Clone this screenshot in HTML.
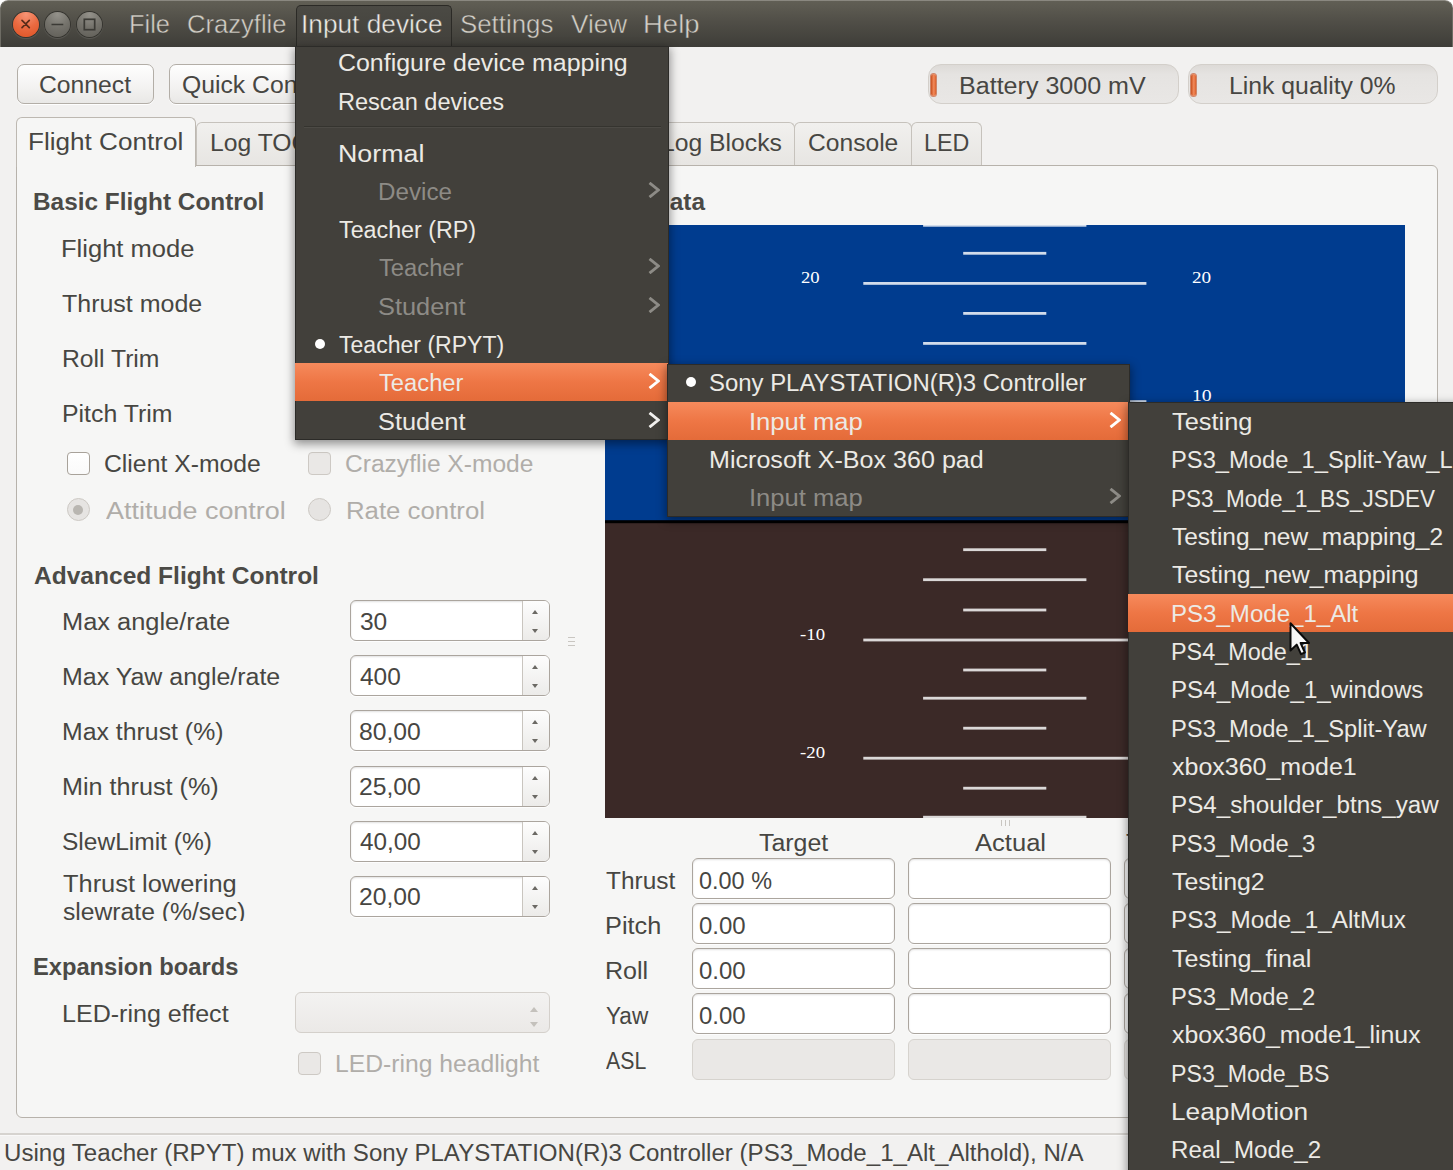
<!DOCTYPE html>
<html><head><meta charset="utf-8"><title>Crazyflie PC Client</title>
<style>
*{box-sizing:border-box;margin:0;padding:0}
html,body{width:1453px;height:1170px;overflow:hidden;background:#fff}
body{font-family:"Liberation Sans",sans-serif;font-size:23px;color:#3c3b37;position:relative}
.abs{position:absolute}
.t{position:absolute;white-space:nowrap;line-height:30px;height:30px;transform-origin:0 0;z-index:2}
#win{position:absolute;left:0;top:0;width:1453px;height:1170px;background:#f2f1f0;border-radius:8px 8px 0 0;overflow:hidden}
#title{position:absolute;left:0;top:0;width:1453px;height:46.500px;background:linear-gradient(#615f55,#504e47 45%,#3e3d38);border-radius:8px 8px 0 0;border-top:1px solid #8a8880;border-left:1px solid #6e6c64;border-right:1px solid #6e6c64}
.wb{position:absolute;top:11.500px;width:25.500px;height:25.500px;border-radius:50%;box-shadow:0 0 0 1px #35342f, 0 1px 1px 1px rgba(255,255,255,.12)}
.btn{position:absolute;height:40px;border:1px solid #b3aea7;border-radius:7px;background:linear-gradient(#fefefe,#f4f3f2 55%,#e9e8e6);box-shadow:0 1px 0 rgba(255,255,255,.9)}
.pbar{position:absolute;top:64px;height:40px;border:1px solid #d3cfca;border-radius:13px;background:linear-gradient(#dddad7,#e5e3e1 25%,#e9e7e5)}
.pbar i{position:absolute;left:2px;top:9px;width:5px;height:22px;border-radius:3px;background:linear-gradient(90deg,#c8501f,#f28a5b 55%,#d9602c);box-shadow:0 0 0 1px rgba(190,70,25,.6)}
.tab{position:absolute;top:122px;height:44px;border:1px solid #c6c2bc;border-bottom:none;border-radius:6px 6px 0 0;background:linear-gradient(#f1f0ee,#e7e5e2)}
.tab.act{top:117px;height:50px;background:#f6f6f5;z-index:3;border-color:#bdb8b1}
#pane{position:absolute;left:15.500px;top:165px;width:1422.500px;height:952.500px;border:1px solid #b7b2ab;border-radius:0 6px 6px 6px;background:#f6f6f5}
.cb{position:absolute;width:23px;height:23px;border:1px solid #a8a29a;border-radius:4px;background:linear-gradient(#fff,#fafafa)}
.cb.off{border-color:#cdc9c4;background:#eae8e6}
.rb{position:absolute;width:23px;height:23px;border:1px solid #cdc9c4;border-radius:50%;background:#e6e4e2}
.rb.on:after{content:"";position:absolute;left:5.500px;top:5.500px;width:10px;height:10px;border-radius:50%;background:#b9b6b1}
.spin{position:absolute;left:350.200px;width:199.500px;height:41px;border:1px solid #aba59e;border-radius:6px;background:#fff;box-shadow:inset 0 1px 2px rgba(0,0,0,.12),0 1px 0 rgba(255,255,255,.8);overflow:hidden}
.spin b{position:absolute;right:0;top:0;width:27px;height:100%;border-left:1px solid #c9c5bf;background:linear-gradient(#fdfdfd,#ecebe9)}
.spin b:before{content:"";position:absolute;left:9.500px;top:8.500px;border:3.500px solid transparent;border-bottom:4px solid #6b6964;border-top:none}
.spin b:after{content:"";position:absolute;left:9.500px;bottom:7px;border:3.500px solid transparent;border-top:4px solid #6b6964;border-bottom:none}
.fld{position:absolute;width:203px;height:41px;border:1px solid #aba59e;border-radius:6px;background:#fff;box-shadow:inset 0 1px 2px rgba(0,0,0,.12),0 1px 0 rgba(255,255,255,.8)}
.fld.off{background:#eae8e6;border-color:#d6d3ce;box-shadow:none}
.menu{position:absolute;background:#42403b;border:1px solid #2c2b28;box-shadow:0 3px 9px 1px rgba(0,0,0,.42)}
.hl{position:absolute;height:38.100px;background:linear-gradient(#f68a5c,#ee7645 50%,#e46b39)}
.dot{position:absolute;width:10px;height:10px;border-radius:50%;background:#fff}

.t.tm{-webkit-text-stroke:0.45px #4e4c45}

.n{font-family:"Liberation Sans",sans-serif;font-size:23px;font-weight:normal;color:#474642}
.b{font-family:"Liberation Sans",sans-serif;font-size:23px;font-weight:bold;color:#4b4a46}
.d{font-family:"Liberation Sans",sans-serif;font-size:23px;font-weight:normal;color:#b0ada9}
.m{font-family:"Liberation Sans",sans-serif;font-size:23px;font-weight:normal;color:#eceae5}
.md{font-family:"Liberation Sans",sans-serif;font-size:23px;font-weight:normal;color:#8d8b86}
.tm{font-family:"Liberation Sans",sans-serif;font-size:26px;font-weight:normal;color:#d3cfc7}
.s{font-family:"Liberation Serif",serif;font-size:17px;font-weight:normal;color:#ffffff}

</style></head><body>
<div id="win">
<div id="title"></div>
<div class="wb" style="left:13px;background:radial-gradient(circle at 50% 10%,#f79475,#ea6a41 50%,#de5223)"></div>
<div class="wb" style="left:44.500px;background:radial-gradient(circle at 50% 10%,#94928b,#74726b 50%,#5f5d57)"></div>
<div class="wb" style="left:76.500px;background:radial-gradient(circle at 50% 10%,#94928b,#74726b 50%,#5f5d57)"></div>
<svg class="abs" style="left:0;top:0;z-index:2" width="110" height="46" viewBox="0 0 110 46">
<path d="M22 20.300l7.300 7.300M29.300 20.300l-7.300 7.300" stroke="#5a2c19" stroke-width="1.700" stroke-linecap="round" fill="none"/>
<path d="M51.500 24.500h11.800" stroke="#3b3a35" stroke-width="1.700" fill="none"/>
<rect x="84.300" y="19.300" width="10.400" height="10.400" stroke="#3b3a35" stroke-width="1.700" fill="none"/>
</svg>
<div class="abs" style="left:296px;top:5px;width:156px;height:42px;border:1px solid #2b2a26;border-bottom:none;border-radius:5px 5px 0 0;background:linear-gradient(#4b4a44,#42403b);z-index:20"></div>
<div class="btn" style="left:17px;top:64px;width:137px"></div>
<div class="btn" style="left:169px;top:64px;width:200px"></div>
<div class="pbar" style="left:928px;width:251px"><i></i></div>
<div class="pbar" style="left:1188px;width:250px"><i></i></div>
<div class="tab act" style="left:15.500px;width:180.500px"></div>
<div class="tab" style="left:196px;width:120px"></div>
<div class="tab" style="left:640px;width:155px"></div>
<div class="tab" style="left:794px;width:118px"></div>
<div class="tab" style="left:911px;width:71px"></div>
<div id="pane"></div>
<div class="abs" style="left:0;top:1133px;width:1453px;height:1.500px;background:#d6d3cf;box-shadow:0 1px 0 #f9f8f8"></div>
<div class="cb" style="left:66.800px;top:451.600px"></div>
<div class="cb off" style="left:308.200px;top:451.600px"></div>
<div class="rb on" style="left:66.500px;top:498.200px"></div>
<div class="rb" style="left:308px;top:498.200px"></div>
<div class="spin" style="top:600px"><b></b></div>
<div class="spin" style="top:655px"><b></b></div>
<div class="spin" style="top:710px"><b></b></div>
<div class="spin" style="top:766px"><b></b></div>
<div class="spin" style="top:821px"><b></b></div>
<div class="spin" style="top:876px"><b></b></div>
<div class="abs" style="left:295px;top:992px;width:254.500px;height:41px;border:1px solid #d4d0cb;border-radius:6px;background:linear-gradient(#f3f2f1,#ebe9e7)"></div>
<div class="abs" style="left:530px;top:1007px;border:4px solid transparent;border-bottom:5px solid #c4c1bc;border-top:none"></div>
<div class="abs" style="left:530px;top:1021.500px;border:4px solid transparent;border-top:5px solid #c4c1bc;border-bottom:none"></div>
<div class="cb off" style="left:298px;top:1051.700px"></div>
<div class="abs" style="left:58px;top:921.300px;width:200px;height:6px;background:#f6f6f5;z-index:3"></div>
<div class="abs" style="left:568px;top:637px;width:7px;height:1px;background:#c9c6c1;box-shadow:0 4px 0 #c9c6c1,0 8px 0 #c9c6c1"></div>
<div class="abs" style="left:1001px;top:820px;width:1px;height:6px;background:#c9c6c1;box-shadow:4px 0 0 #c9c6c1,8px 0 0 #c9c6c1"></div>
<svg class="abs" style="left:605px;top:225px" width="800" height="593" viewBox="605 225 800 593"><rect x="605" y="225" width="800" height="593" fill="#003c8f"/><rect x="605" y="521.500" width="800" height="296.5" fill="#3b2927"/><rect x="605" y="520.200" width="800" height="3" fill="#000"/><rect x="923.1" y="223.9" width="163.3" height="2.800" fill="#fff" fill-opacity=".82"/><rect x="963.2" y="251.9" width="83.1" height="2.800" fill="#fff" fill-opacity=".82"/><rect x="863.3" y="282.0" width="283.1" height="2.800" fill="#fff" fill-opacity=".82"/><rect x="963.2" y="312.0" width="83.1" height="2.800" fill="#fff" fill-opacity=".82"/><rect x="923.1" y="342.0" width="163.3" height="2.800" fill="#fff" fill-opacity=".82"/><rect x="963.2" y="371.2" width="83.1" height="2.800" fill="#fff" fill-opacity=".82"/><rect x="863.3" y="400.2" width="283.1" height="2.800" fill="#fff" fill-opacity=".82"/><rect x="963.2" y="430.1" width="83.1" height="2.800" fill="#fff" fill-opacity=".82"/><rect x="923.1" y="459.6" width="163.3" height="2.800" fill="#fff" fill-opacity=".82"/><rect x="963.2" y="489.1" width="83.1" height="2.800" fill="#fff" fill-opacity=".82"/><rect x="963.2" y="548.3" width="83.1" height="2.800" fill="#fff" fill-opacity=".82"/><rect x="923.1" y="578.3" width="163.3" height="2.800" fill="#fff" fill-opacity=".82"/><rect x="963.2" y="608.6" width="83.1" height="2.800" fill="#fff" fill-opacity=".82"/><rect x="863.3" y="638.6" width="283.1" height="2.800" fill="#fff" fill-opacity=".82"/><rect x="963.2" y="668.6" width="83.1" height="2.800" fill="#fff" fill-opacity=".82"/><rect x="923.1" y="696.8" width="163.3" height="2.800" fill="#fff" fill-opacity=".82"/><rect x="963.2" y="726.8" width="83.1" height="2.800" fill="#fff" fill-opacity=".82"/><rect x="863.3" y="756.8" width="283.1" height="2.800" fill="#fff" fill-opacity=".82"/><rect x="963.2" y="786.8" width="83.1" height="2.800" fill="#fff" fill-opacity=".82"/><rect x="923.1" y="815.8" width="163.3" height="2.800" fill="#fff" fill-opacity=".82"/></svg>
<div class="fld" style="left:691.500px;top:858.3px"></div>
<div class="fld" style="left:908.200px;top:858.3px"></div>
<div class="fld" style="left:1123.500px;top:858.3px"></div>
<div class="fld" style="left:691.500px;top:903.3px"></div>
<div class="fld" style="left:908.200px;top:903.3px"></div>
<div class="fld" style="left:1123.500px;top:903.3px"></div>
<div class="fld" style="left:691.500px;top:948.4px"></div>
<div class="fld" style="left:908.200px;top:948.4px"></div>
<div class="fld" style="left:1123.500px;top:948.4px"></div>
<div class="fld" style="left:691.500px;top:993.4px"></div>
<div class="fld" style="left:908.200px;top:993.4px"></div>
<div class="fld" style="left:1123.500px;top:993.4px"></div>
<div class="fld off" style="left:691.500px;top:1038.5px"></div>
<div class="fld off" style="left:908.200px;top:1038.5px"></div>
<div class="fld off" style="left:1123.500px;top:1038.5px"></div>
<div class="menu" style="left:295px;top:45.500px;width:374.200px;height:394px;z-index:20"></div>
<div class="abs" style="left:304px;top:126px;width:357px;height:1px;background:#35342f;box-shadow:0 1px 0 #4c4a45;z-index:21"></div>
<div class="hl" style="left:295.300px;top:363.400px;width:373.200px;z-index:21"></div>
<div class="dot" style="left:315px;top:338.600px;z-index:21"></div>
<svg class="abs" style="left:648px;top:181.8px;z-index:21" width="12" height="16" viewBox="0 0 12 16"><path d="M1.500 0.800l8.800 7.200-8.800 7.200" stroke="#8d8b86" stroke-width="2.800" fill="none"/></svg>
<svg class="abs" style="left:648px;top:258.3px;z-index:21" width="12" height="16" viewBox="0 0 12 16"><path d="M1.500 0.800l8.800 7.200-8.800 7.200" stroke="#8d8b86" stroke-width="2.800" fill="none"/></svg>
<svg class="abs" style="left:648px;top:296.6px;z-index:21" width="12" height="16" viewBox="0 0 12 16"><path d="M1.500 0.800l8.800 7.200-8.800 7.200" stroke="#8d8b86" stroke-width="2.800" fill="none"/></svg>
<svg class="abs" style="left:648px;top:373.3px;z-index:21" width="12" height="16" viewBox="0 0 12 16"><path d="M1.500 0.800l8.800 7.200-8.800 7.200" stroke="#fff" stroke-width="2.800" fill="none"/></svg>
<svg class="abs" style="left:648px;top:411.6px;z-index:21" width="12" height="16" viewBox="0 0 12 16"><path d="M1.500 0.800l8.800 7.200-8.800 7.200" stroke="#f1f0ee" stroke-width="2.800" fill="none"/></svg>
<div class="menu" style="left:667px;top:363.500px;width:462.500px;height:153.300px;z-index:22"></div>
<div class="hl" style="left:667.500px;top:401.700px;width:461px;z-index:23"></div>
<div class="dot" style="left:686.400px;top:377px;z-index:23"></div>
<svg class="abs" style="left:1109.3px;top:412px;z-index:23" width="12" height="16" viewBox="0 0 12 16"><path d="M1.500 0.800l8.800 7.200-8.800 7.200" stroke="#fff" stroke-width="2.800" fill="none"/></svg>
<svg class="abs" style="left:1109.3px;top:488.4px;z-index:23" width="12" height="16" viewBox="0 0 12 16"><path d="M1.500 0.800l8.800 7.200-8.800 7.200" stroke="#8d8b86" stroke-width="2.800" fill="none"/></svg>
<div class="menu" style="left:1128px;top:402px;width:340px;height:800px;z-index:24"></div>
<div class="hl" style="left:1128.300px;top:593.500px;width:330px;z-index:25"></div>
<svg class="abs" style="left:1287.400px;top:619.800px;z-index:30" width="26" height="40" viewBox="0 0 26 40"><defs><linearGradient id="cg" x1="0" y1="0" x2="1" y2="0"><stop offset="0" stop-color="#f4f4f4"/><stop offset="1" stop-color="#ffffff"/></linearGradient></defs><path d="M3.500 3.200v27.300l6.200-5.900 4.300 9.600 3.900-1.700-4.300-9.500h8.400z" fill="url(#cg)" stroke="#0a0a0a" stroke-width="2" stroke-linejoin="round"/></svg>
<span class="t tm" style="left:128.6px;top:8.6px;transform:scaleX(0.979)">File</span>
<span class="t tm" style="left:186.6px;top:8.6px;transform:scaleX(0.984)">Crazyflie</span>
<span class="t tm" style="left:301.3px;top:8.6px;transform:scaleX(1.010);z-index:21;color:#eeece8">Input device</span>
<span class="t tm" style="left:460.0px;top:8.6px;transform:scaleX(0.994)">Settings</span>
<span class="t tm" style="left:571.1px;top:8.6px;transform:scaleX(1.003)">View</span>
<span class="t tm" style="left:643.0px;top:8.6px;transform:scaleX(1.057)">Help</span>
<span class="t n" style="left:39.3px;top:69.9px;transform:scaleX(1.074)">Connect</span>
<span class="t n" style="left:182.2px;top:69.9px;transform:scaleX(1.075)">Quick Connect</span>
<span class="t n" style="left:958.9px;top:70.7px;transform:scaleX(1.090)">Battery 3000 mV</span>
<span class="t n" style="left:1229.3px;top:70.7px;transform:scaleX(1.077)">Link quality 0%</span>
<span class="t n" style="left:28.1px;top:127.1px;transform:scaleX(1.135);z-index:4">Flight Control</span>
<span class="t n" style="left:209.5px;top:128.4px;transform:scaleX(1.075)">Log TOC</span>
<span class="t n" style="left:660.6px;top:128.4px;transform:scaleX(1.075)">Log Blocks</span>
<span class="t n" style="left:807.9px;top:128.4px;transform:scaleX(1.070)">Console</span>
<span class="t n" style="left:924.4px;top:128.4px;transform:scaleX(1.011)">LED</span>
<span class="t b" style="left:33.3px;top:187.0px;transform:scaleX(1.059)">Basic Flight Control</span>
<span class="t n" style="left:61.3px;top:233.9px;transform:scaleX(1.110)">Flight mode</span>
<span class="t n" style="left:62.4px;top:288.8px;transform:scaleX(1.086)">Thrust mode</span>
<span class="t n" style="left:61.5px;top:343.9px;transform:scaleX(1.074)">Roll Trim</span>
<span class="t n" style="left:61.5px;top:398.8px;transform:scaleX(1.080)">Pitch Trim</span>
<span class="t n" style="left:103.5px;top:448.9px;transform:scaleX(1.076)">Client X-mode</span>
<span class="t d" style="left:345.4px;top:448.9px;transform:scaleX(1.068)">Crazyflie X-mode</span>
<span class="t d" style="left:105.8px;top:495.5px;transform:scaleX(1.172)">Attitude control</span>
<span class="t d" style="left:346.2px;top:495.5px;transform:scaleX(1.121)">Rate control</span>
<span class="t b" style="left:34.0px;top:560.6px;transform:scaleX(1.067)">Advanced Flight Control</span>
<span class="t n" style="left:61.6px;top:606.9px;transform:scaleX(1.105)">Max angle/rate</span>
<span class="t n" style="left:61.6px;top:662.2px;transform:scaleX(1.085)">Max Yaw angle/rate</span>
<span class="t n" style="left:61.6px;top:717.3px;transform:scaleX(1.080)">Max thrust (%)</span>
<span class="t n" style="left:61.6px;top:772.3px;transform:scaleX(1.095)">Min thrust (%)</span>
<span class="t n" style="left:61.6px;top:827.3px;transform:scaleX(1.066)">SlewLimit (%)</span>
<span class="t n" style="left:62.7px;top:868.8px;transform:scaleX(1.105)">Thrust lowering</span>
<span class="t n" style="left:62.7px;top:896.8px;transform:scaleX(1.073)">slewrate (%/sec)</span>
<span class="t b" style="left:33.0px;top:952.3px;transform:scaleX(1.030)">Expansion boards</span>
<span class="t n" style="left:61.6px;top:999.0px;transform:scaleX(1.089)">LED-ring effect</span>
<span class="t d" style="left:335.1px;top:1048.6px;transform:scaleX(1.073)">LED-ring headlight</span>
<span class="t n" style="left:360.1px;top:606.9px;transform:scaleX(1.065)">30</span>
<span class="t n" style="left:360.1px;top:662.2px;transform:scaleX(1.062)">400</span>
<span class="t n" style="left:359.0px;top:717.3px;transform:scaleX(1.074)">80,00</span>
<span class="t n" style="left:359.0px;top:772.3px;transform:scaleX(1.074)">25,00</span>
<span class="t n" style="left:360.1px;top:827.3px;transform:scaleX(1.055)">40,00</span>
<span class="t n" style="left:359.0px;top:882.3px;transform:scaleX(1.074)">20,00</span>
<span class="t b" style="left:579.2px;top:186.6px;transform:scaleX(1.060)">Flight Data</span>
<span class="t n" style="left:758.5px;top:828.2px;transform:scaleX(1.083)">Target</span>
<span class="t n" style="left:974.8px;top:828.2px;transform:scaleX(1.111)">Actual</span>
<span class="t n" style="left:1125.7px;top:828.2px;transform:scaleX(1.075)">Thrust</span>
<span class="t n" style="left:606.1px;top:865.7px;transform:scaleX(1.062)">Thrust</span>
<span class="t n" style="left:605.0px;top:910.9px;transform:scaleX(1.101)">Pitch</span>
<span class="t n" style="left:605.0px;top:955.9px;transform:scaleX(1.090)">Roll</span>
<span class="t n" style="left:605.5px;top:1000.9px;transform:scaleX(0.981)">Yaw</span>
<span class="t n" style="left:605.5px;top:1045.7px;transform:scaleX(0.925)">ASL</span>
<span class="t n" style="left:699.0px;top:865.7px;transform:scaleX(1.019)">0.00 %</span>
<span class="t n" style="left:699.0px;top:910.9px;transform:scaleX(1.042)">0.00</span>
<span class="t n" style="left:699.0px;top:955.9px;transform:scaleX(1.042)">0.00</span>
<span class="t n" style="left:699.0px;top:1000.9px;transform:scaleX(1.042)">0.00</span>
<span class="t n" style="left:3.6px;top:1138.1px;transform:scaleX(1.047)">Using Teacher (RPYT) mux with Sony PLAYSTATION(R)3 Controller (PS3_Mode_1_Alt_Althold), N/A</span>
<span class="t s" style="left:800.9px;top:263.3px;transform:scaleX(1.097)">20</span>
<span class="t s" style="left:1192.2px;top:263.3px;transform:scaleX(1.127)">20</span>
<span class="t s" style="left:1191.6px;top:381.3px;transform:scaleX(1.161)">10</span>
<span class="t s" style="left:800.0px;top:619.6px;transform:scaleX(1.106)">-10</span>
<span class="t s" style="left:800.0px;top:738.0px;transform:scaleX(1.106)">-20</span>
<span class="t m" style="left:338.1px;top:48.0px;transform:scaleX(1.084);z-index:21">Configure device mapping</span>
<span class="t m" style="left:338.2px;top:86.5px;transform:scaleX(1.023);z-index:21">Rescan devices</span>
<span class="t m" style="left:338.0px;top:138.7px;transform:scaleX(1.165);z-index:21">Normal</span>
<span class="t md" style="left:378.1px;top:176.9px;transform:scaleX(1.052);z-index:21">Device</span>
<span class="t m" style="left:339.2px;top:215.1px;transform:scaleX(1.012);z-index:21">Teacher (RP)</span>
<span class="t md" style="left:379.2px;top:253.4px;transform:scaleX(1.032);z-index:21">Teacher</span>
<span class="t md" style="left:378.1px;top:291.7px;transform:scaleX(1.104);z-index:21">Student</span>
<span class="t m" style="left:339.2px;top:330.0px;transform:scaleX(1.002);z-index:21">Teacher (RPYT)</span>
<span class="t m" style="left:379.2px;top:368.3px;transform:scaleX(1.032);z-index:21">Teacher</span>
<span class="t m" style="left:378.1px;top:406.6px;transform:scaleX(1.104);z-index:21">Student</span>
<span class="t m" style="left:709.2px;top:368.3px;transform:scaleX(1.040);z-index:23">Sony PLAYSTATION(R)3 Controller</span>
<span class="t m" style="left:748.6px;top:406.5px;transform:scaleX(1.113);z-index:23">Input map</span>
<span class="t m" style="left:709.1px;top:444.6px;transform:scaleX(1.091);z-index:23">Microsoft X-Box 360 pad</span>
<span class="t md" style="left:748.6px;top:482.9px;transform:scaleX(1.113);z-index:23">Input map</span>
<span class="t m" style="left:1172.2px;top:406.9px;transform:scaleX(1.104);z-index:25">Testing</span>
<span class="t m" style="left:1171.2px;top:445.2px;transform:scaleX(1.031);z-index:25">PS3_Mode_1_Split-Yaw_Left</span>
<span class="t m" style="left:1171.2px;top:483.6px;transform:scaleX(0.979);z-index:25">PS3_Mode_1_BS_JSDEV</span>
<span class="t m" style="left:1172.2px;top:521.9px;transform:scaleX(1.065);z-index:25">Testing_new_mapping_2</span>
<span class="t m" style="left:1172.2px;top:560.2px;transform:scaleX(1.077);z-index:25">Testing_new_mapping</span>
<span class="t m" style="left:1171.2px;top:598.5px;transform:scaleX(1.046);z-index:25">PS3_Mode_1_Alt</span>
<span class="t m" style="left:1171.2px;top:636.9px;transform:scaleX(1.018);z-index:25">PS4_Mode_1</span>
<span class="t m" style="left:1171.1px;top:675.2px;transform:scaleX(1.050);z-index:25">PS4_Mode_1_windows</span>
<span class="t m" style="left:1171.2px;top:713.5px;transform:scaleX(1.033);z-index:25">PS3_Mode_1_Split-Yaw</span>
<span class="t m" style="left:1172.2px;top:751.9px;transform:scaleX(1.086);z-index:25">xbox360_mode1</span>
<span class="t m" style="left:1171.1px;top:790.2px;transform:scaleX(1.052);z-index:25">PS4_shoulder_btns_yaw</span>
<span class="t m" style="left:1171.2px;top:828.5px;transform:scaleX(1.034);z-index:25">PS3_Mode_3</span>
<span class="t m" style="left:1172.2px;top:866.9px;transform:scaleX(1.082);z-index:25">Testing2</span>
<span class="t m" style="left:1171.1px;top:905.2px;transform:scaleX(1.056);z-index:25">PS3_Mode_1_AltMux</span>
<span class="t m" style="left:1172.2px;top:943.5px;transform:scaleX(1.090);z-index:25">Testing_final</span>
<span class="t m" style="left:1171.2px;top:981.8px;transform:scaleX(1.034);z-index:25">PS3_Mode_2</span>
<span class="t m" style="left:1172.2px;top:1020.2px;transform:scaleX(1.080);z-index:25">xbox360_mode1_linux</span>
<span class="t m" style="left:1171.2px;top:1058.5px;transform:scaleX(1.007);z-index:25">PS3_Mode_BS</span>
<span class="t m" style="left:1171.1px;top:1096.8px;transform:scaleX(1.141);z-index:25">LeapMotion</span>
<span class="t m" style="left:1171.2px;top:1135.2px;transform:scaleX(1.048);z-index:25">Real_Mode_2</span>
</div>
</body></html>
